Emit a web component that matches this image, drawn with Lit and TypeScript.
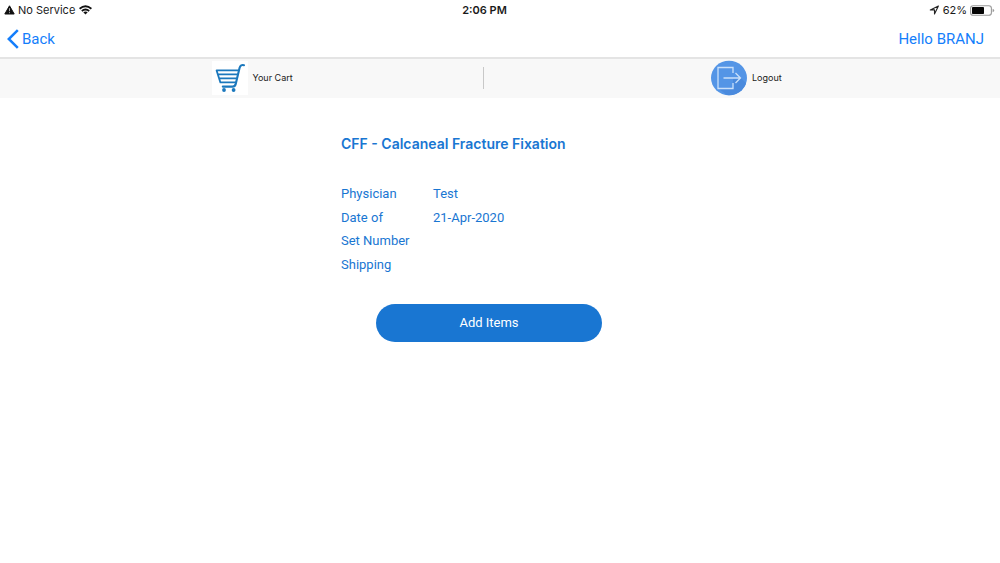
import { LitElement, html, css, nothing } from "lit";
import { customElement } from "lit/decorators.js";

interface Detail {
  label: string;
  value?: string;
}

@customElement("app-root")
export class AppRoot extends LitElement {
  static styles = css`
    :host {
      display: block;
      min-height: 100vh;
      background: #fff;
      color: #1a1a1a;
      font-family: Inter, "Liberation Sans", sans-serif;
    }
    svg {
      display: block;
      flex: none;
    }
    a,
    button {
      color: inherit;
      font: inherit;
      text-decoration: none;
    }
    .status {
      display: grid;
      grid-template-columns: 1fr auto 1fr;
      align-items: center;
      height: 20px;
      padding: 0 5px 0 4px;
      font-size: 11px;
      line-height: 18px;
    }
    .group {
      display: flex;
      align-items: center;
      gap: 3px;
    }
    .end {
      justify-content: flex-end;
    }
    .clock {
      font-weight: 600;
      padding-right: 30px;
    }
    .nav {
      display: flex;
      justify-content: space-between;
      align-items: center;
      height: 37px;
      padding: 0 16px 0 7px;
      border-bottom: 2px solid #e4e4e4;
      color: #147efb;
      font-family: Roboto, "Liberation Sans", sans-serif;
      font-size: 15px;
    }
    .toolbar {
      display: grid;
      grid-template-columns: 483fr 1px 516fr;
      align-items: center;
      height: 37px;
      padding-bottom: 2px;
      background: #f8f8f8;
      font-size: 9px;
    }
    .divider {
      height: 22px;
      background: #c8c8c8;
    }
    .tool {
      display: flex;
      align-items: center;
      gap: 5px;
      color: #1a1a1a;
    }
    .cart {
      padding-left: 43.8%;
    }
    .logout {
      padding: 0 0 0 44%;
      border: 0;
      background: none;
    }
    .case {
      width: 318px;
      max-width: 100%;
      margin: 0 auto;
      padding-top: 34px;
      color: #1976d2;
      font-family: Roboto, "Liberation Sans", sans-serif;
      font-size: 13px;
      line-height: 24px;
    }
    h1 {
      margin: 0 0 26px;
      font-family: Inter, "Liberation Sans", sans-serif;
      font-size: 14px;
      font-weight: 600;
      line-height: 24px;
    }
    dl {
      margin: 0 0 28px;
    }
    .row {
      display: grid;
      grid-template-columns: 92px 1fr;
    }
    .row:nth-child(even) {
      line-height: 23px;
    }
    dt,
    dd {
      margin: 0;
    }
    .add {
      display: block;
      width: 226px;
      height: 38px;
      margin-left: 35px;
      padding: 0;
      border: 0;
      border-radius: 19px;
      background: #1976d2;
      color: #fff;
    }
  `;

  private details: Detail[] = [
    { label: "Physician", value: "Test" },
    { label: "Date of", value: "21-Apr-2020" },
    { label: "Set Number" },
    { label: "Shipping" },
  ];

  render() {
    return html`
      <div class="status">
        <div class="group">
          <svg width="11" height="10" viewBox="0 0 11 10" aria-hidden="true">
            <path d="M5.5 .8 10.2 9H.8z" fill="#111" stroke="#111" stroke-width="1" stroke-linejoin="round" />
            <path d="M5.5 3.2v3M5.5 7.2v1" stroke="#aaa" stroke-width="1" />
          </svg>
          <span>No Service</span>
          <svg width="15" height="10" viewBox="0 0 15 10" aria-hidden="true">
            <path d="M1.6 3.7Q7.5-1.2 13.4 3.7M3.8 6Q7.5 2.9 11.2 6" fill="none" stroke="#111" stroke-width="1.8" />
            <path d="M5.3 7.3Q7.5 5.7 9.7 7.3L7.5 9.5z" fill="#111" />
          </svg>
        </div>
        <time class="clock">2:06 PM</time>
        <div class="group end">
          <svg width="11" height="10" viewBox="0 0 11 10" aria-hidden="true">
            <path d="M9.4 1 1.3 4.9H5.5V9z" fill="none" stroke="#222" stroke-width="1.1" stroke-linejoin="round" />
          </svg>
          <span>62%</span>
          <svg width="25" height="11" viewBox="0 0 25 11" aria-hidden="true">
            <rect x=".6" y=".7" width="20.8" height="9.6" rx="2.6" fill="#fff" stroke="#999" stroke-width="1.1" />
            <rect x="2" y="2" width="12" height="7" rx=".8" fill="#050505" />
            <path d="M22.6 3.7q1.6.5 1.6 1.8t-1.6 1.8z" fill="#999" />
          </svg>
        </div>
      </div>

      <nav class="nav">
        <a class="group" href="#back">
          <svg width="12" height="20" viewBox="0 0 12 20" aria-hidden="true">
            <path d="M10.8 1.2 1.8 10l9 8.8" fill="none" stroke="#147efb" stroke-width="2.5" />
          </svg>
          <span>Back</span>
        </a>
        <span>Hello BRANJ</span>
      </nav>

      <div class="toolbar">
        <a class="tool cart" href="#cart">
          <svg width="36" height="34" viewBox="0 0 36 34" aria-hidden="true">
            <path fill="#fff" d="M0 0h36v34H0z" />
            <g fill="none" stroke="#1b78bd" stroke-width="1.8" stroke-linecap="round" stroke-linejoin="round">
              <path d="M32 4.2Q28.6 3.2 27.6 6.8L23.6 23.4q-.6 2.2-3 2.2H10.8" stroke-width="2.1" />
              <path d="M26.3 9.4H4.6L8.4 21.4H23.6M5.8 13.4H25.4M7.2 17.4H24.4" />
            </g>
            <circle cx="12" cy="29" r="1.9" fill="#1b78bd" />
            <circle cx="21.6" cy="29" r="1.9" fill="#1b78bd" />
          </svg>
          <span>Your Cart</span>
        </a>
        <span class="divider"></span>
        <button class="tool logout" type="button">
          <svg width="36" height="36" viewBox="0 0 36 36" aria-hidden="true">
            <defs>
              <clipPath id="disc"><ellipse cx="18" cy="18" rx="18" ry="17.3" /></clipPath>
            </defs>
            <g clip-path="url(#disc)">
              <path fill="#5495e6" d="M0 0h36v36H0z" />
              <path fill="#4a8add" d="M30 18l6 6v12H17L7 28h15V18z" />
            </g>
            <path
              d="M22 13V7.5H7V28.5H22V23M12.5 18H29.5M24.5 13l5 5-5 5"
              fill="none" stroke="#c9e0fa" stroke-width="1.3"
            />
          </svg>
          <span>Logout</span>
        </button>
      </div>

      <main class="case">
        <h1>CFF - Calcaneal Fracture Fixation</h1>
        <dl>
          ${this.details.map(
            (d) => html`<div class="row">
              <dt>${d.label}</dt>
              ${d.value ? html`<dd>${d.value}</dd>` : nothing}
            </div>`
          )}
        </dl>
        <button class="add" type="button">Add Items</button>
      </main>
    `;
  }
}
